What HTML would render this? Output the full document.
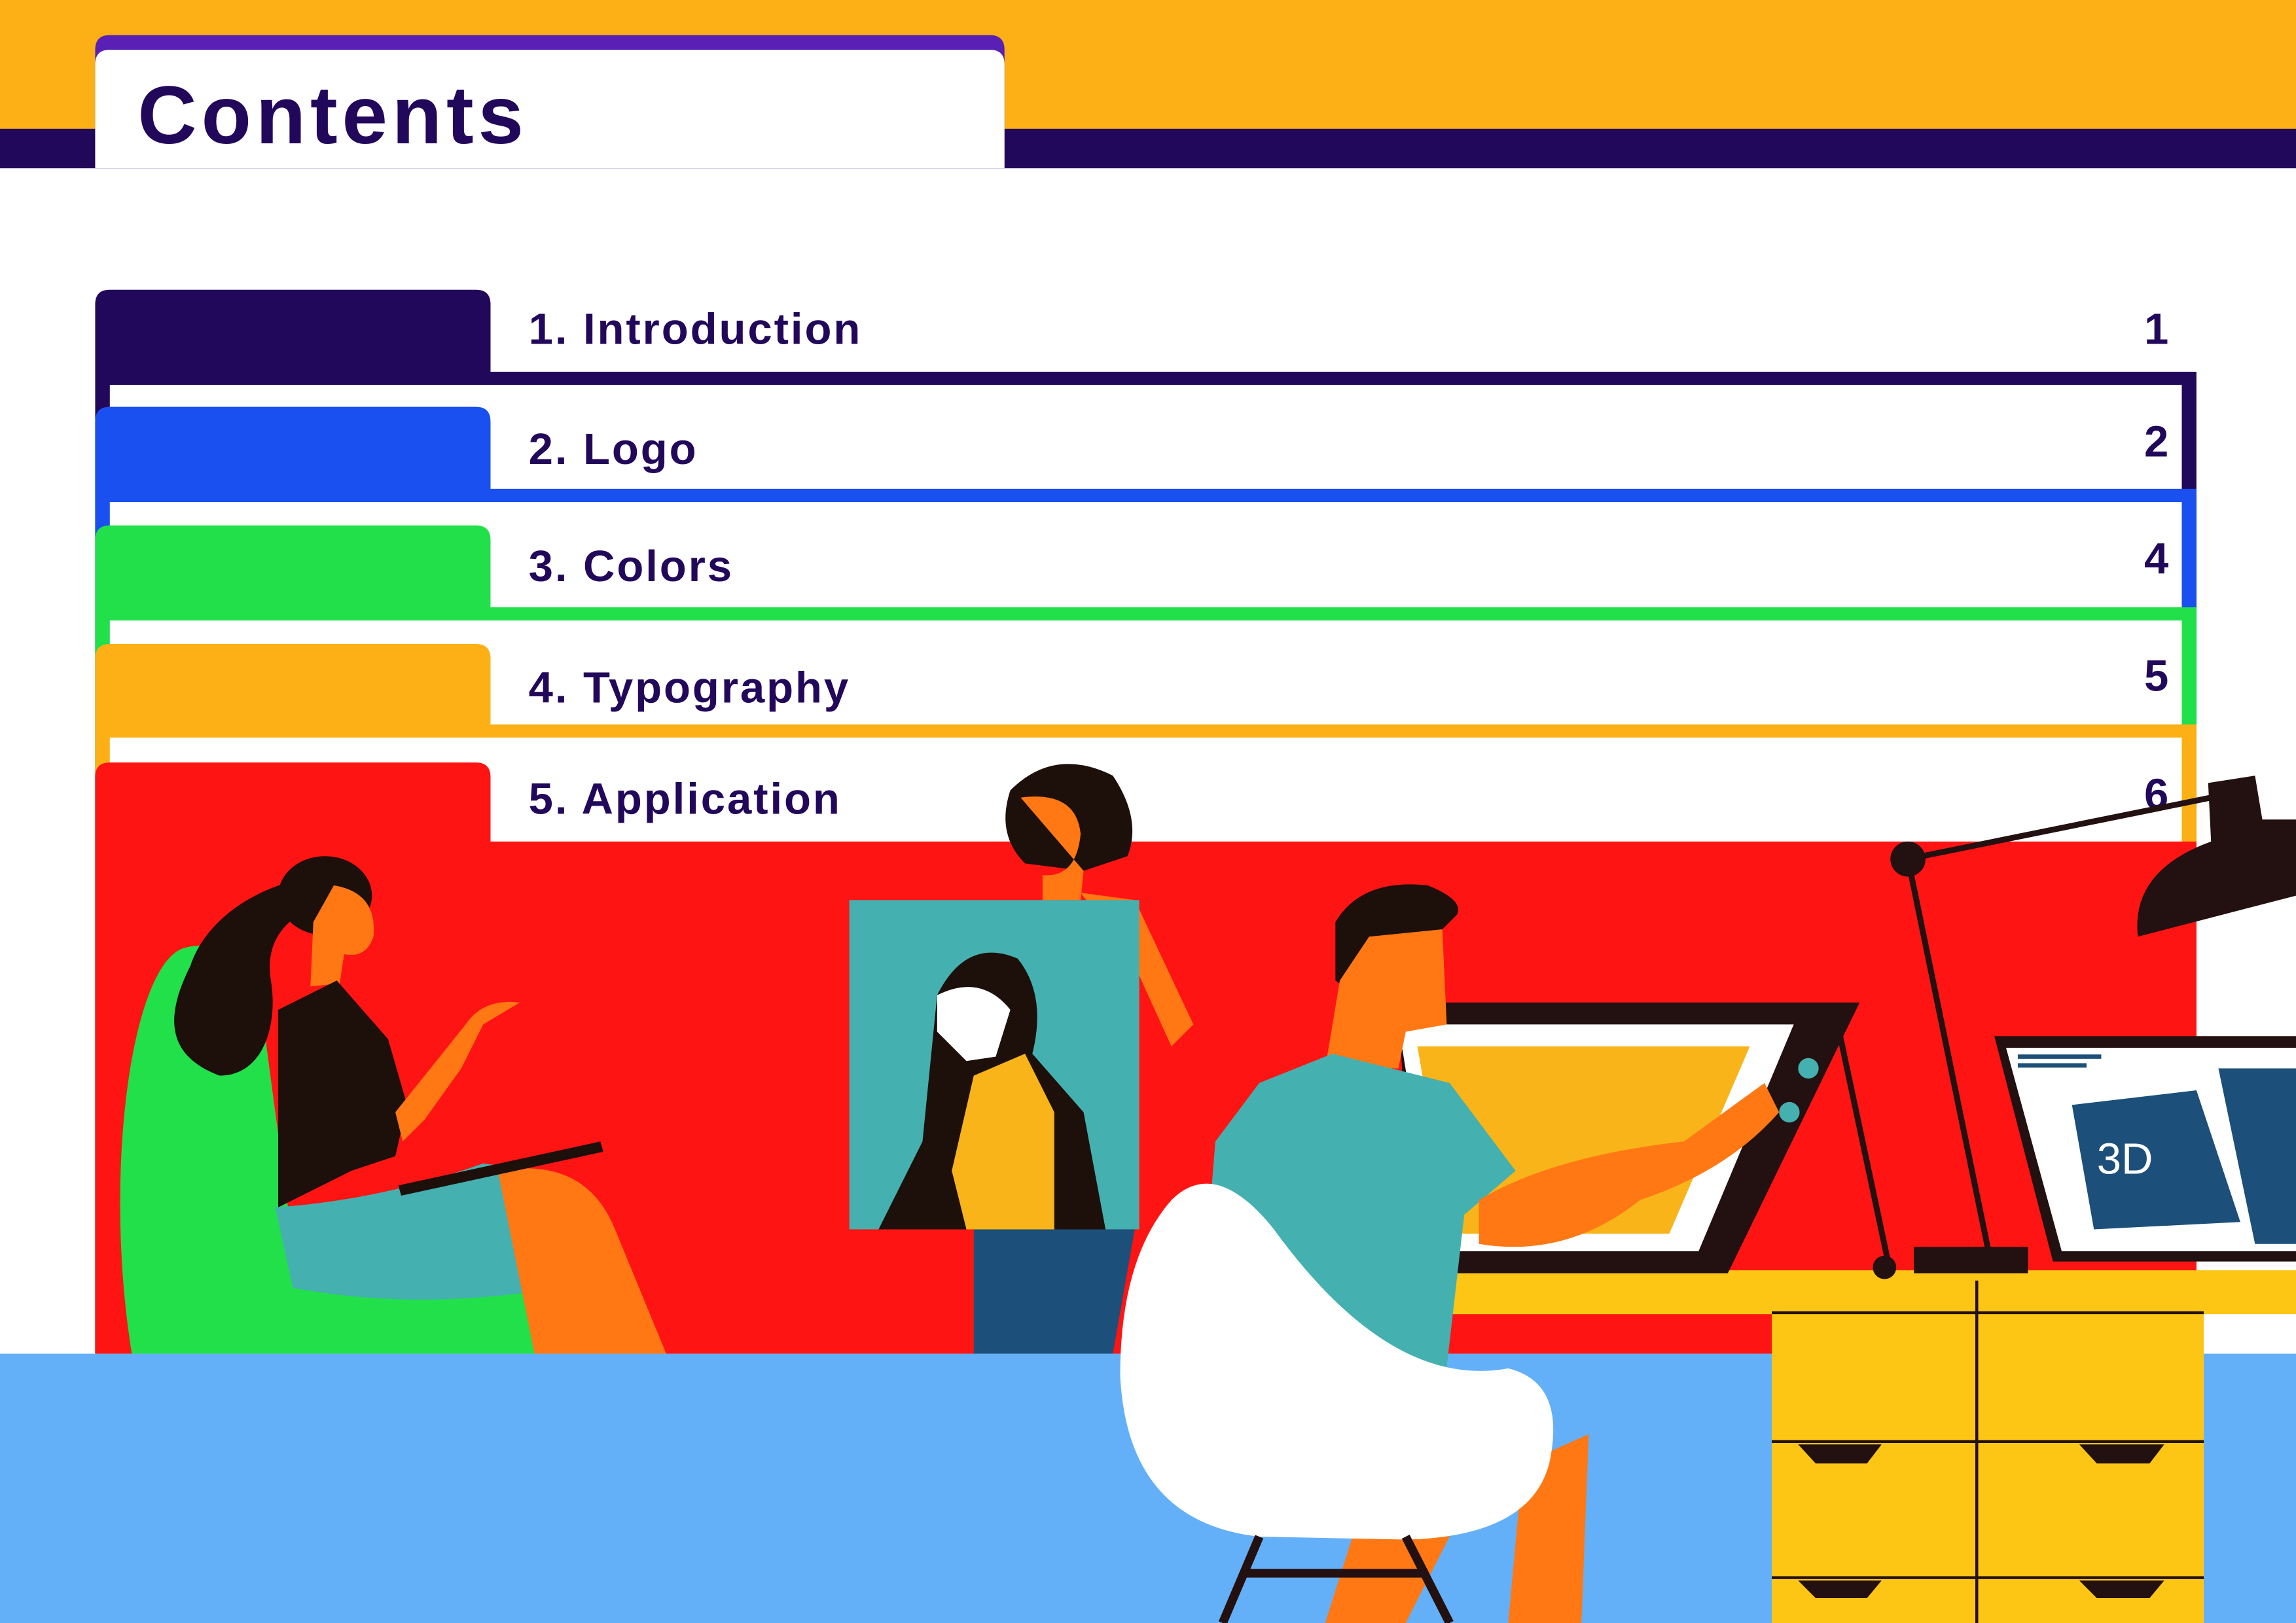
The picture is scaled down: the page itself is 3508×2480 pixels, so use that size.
<!DOCTYPE html>
<html><head><meta charset="utf-8"><style>
html,body{margin:0;padding:0;background:#fff;}
svg{display:block}
text{font-family:"Liberation Sans",sans-serif;font-weight:bold;fill:#22085a}
</style></head><body>
<svg width="3508" height="2480" viewBox="0 0 1568 1109" preserveAspectRatio="none" xmlns="http://www.w3.org/2000/svg">
<rect width="1568" height="1109" fill="#fff"/>
<rect x="0" y="0" width="1568" height="89" fill="#fdb016"/>
<rect x="0" y="88" width="1568" height="27" fill="#22085a"/>
<path d="M65 115 V34 Q65 24 75 24 H676 Q686 24 686 34 V115 Z" fill="#5a1fb5"/>
<path d="M65 115 V44 Q65 34 75 34 H676 Q686 34 686 44 V115 Z" fill="#fff"/>
<text x="94" y="98" font-size="56" letter-spacing="3">Contents</text>

<path d="M65 925 V208 Q65 198 75 198 H325 Q335 198 335 208 V254 H1500 V925 Z" fill="#22085a"/>
<rect x="75" y="263" width="1415" height="662" fill="#fff"/>
<path d="M65 925 V288 Q65 278 75 278 H325 Q335 278 335 288 V334 H1500 V925 Z" fill="#1a50f0"/>
<rect x="75" y="343" width="1415" height="582" fill="#fff"/>
<path d="M65 925 V369 Q65 359 75 359 H325 Q335 359 335 369 V415 H1500 V925 Z" fill="#22e04a"/>
<rect x="75" y="424" width="1415" height="501" fill="#fff"/>
<path d="M65 925 V450 Q65 440 75 440 H325 Q335 440 335 450 V495 H1500 V925 Z" fill="#fdb016"/>
<rect x="75" y="504" width="1415" height="421" fill="#fff"/>
<path d="M65 925 V531 Q65 521 75 521 H325 Q335 521 335 531 V575 H1500 V925 Z" fill="#ff1414"/>

<g font-size="30" letter-spacing="1.3">
<text x="361" y="235">1. Introduction</text>
<text x="361" y="317">2. Logo</text>
<text x="361" y="397">3. Colors</text>
<text x="361" y="480">4. Typography</text>
<text x="361" y="556">5. Application</text>
</g>
<g font-size="30">
<text x="1481" y="235" text-anchor="end">1</text>
<text x="1481" y="312" text-anchor="end">2</text>
<text x="1481" y="392" text-anchor="end">4</text>
<text x="1481" y="472" text-anchor="end">5</text>
<text x="1481" y="553" text-anchor="end">6</text>
</g>

<rect x="0" y="925" width="1568" height="184" fill="#64b0f8"/>

<!-- green chair -->
<path d="M90 925 C70 800 90 660 125 648 C150 640 170 660 180 700 L200 850 C300 860 400 850 445 920 L445 925 Z" fill="#22e04a"/>
<!-- left woman -->
<path d="M200 602 C170 610 140 630 130 660 C115 690 110 720 150 735 C180 735 190 700 185 670 C180 640 200 625 215 620 Z" fill="#1d0f0a"/>
<ellipse cx="222" cy="612" rx="32" ry="27" fill="#1d0f0a"/>
<path d="M228 605 Q258 610 255 640 Q250 655 235 652 L232 672 L212 674 L214 630 Z" fill="#ff7814"/>
<path d="M190 690 L230 670 L265 710 L278 755 L270 790 L240 800 L190 825 Z" fill="#1d0f0a"/>
<path d="M318 700 Q330 682 355 685 L330 700 L315 730 L290 765 L275 780 L270 760 Z" fill="#ff7814"/>
<path d="M188 825 Q260 820 330 795 L368 800 L368 882 Q280 895 200 880 Z" fill="#45b0b0"/>
<path d="M340 800 Q400 790 420 840 L455 925 L365 925 Z" fill="#ff7814"/>
<path d="M272 810 L410 780 L412 787 L274 817 Z" fill="#1d0f0a"/>
<!-- painting woman -->
<path d="M690 540 Q720 510 760 530 Q780 560 770 585 L740 595 L700 590 Q680 570 690 540Z" fill="#1d0f0a"/>
<path d="M697 545 Q735 540 738 570 Q735 600 712 598 L712 615 L738 615 L740 595 Z" fill="#ff7814"/>
<path d="M738 610 L775 615 L815 700 L800 715 L775 660 Z" fill="#ff7814"/>
<rect x="580" y="615" width="198" height="225" fill="#45b0b0"/>
<path d="M640 680 Q660 640 695 655 Q715 680 705 720 L740 760 L755 840 L600 840 L630 780 Z" fill="#1d0f0a"/>
<path d="M640 680 Q670 665 690 690 L680 722 L660 725 L640 705 Z" fill="#fff"/>
<path d="M665 735 L700 720 L720 760 L720 840 L660 840 L650 800 Z" fill="#f8b418"/>
<path d="M665 840 H775 L760 925 H665 Z" fill="#1c4f7a"/>
<!-- lamp -->
<path d="M1303 587 L1510 545 M1303 587 L1358 855" stroke="#231010" stroke-width="4" fill="none"/>
<circle cx="1303" cy="587" r="12" fill="#231010"/>
<path d="M1460 640 Q1455 595 1510 575 L1508 535 L1540 530 L1545 560 Q1565 560 1568 560 V612 Z" fill="#231010"/>
<!-- desk -->
<rect x="985" y="868" width="583" height="30" fill="#fdc614"/>
<rect x="1210" y="897" width="295" height="212" fill="#fdc614"/>
<path d="M1210 897 H1505 M1350 875 V1109 M1210 985 H1505 M1210 1078 H1505" stroke="#231010" stroke-width="2"/>
<path d="M1228 987 H1285 L1275 1000 H1240 Z M1420 987 H1478 L1468 1000 H1432 Z M1228 1080 H1285 L1275 1092 H1240 Z M1420 1080 H1478 L1468 1092 H1432 Z" fill="#231010"/>
<rect x="1307" y="852" width="78" height="18" fill="#231010"/>
<!-- monitor -->
<path d="M1362 708 H1568 V862 H1402 Z" fill="#231010"/>
<path d="M1370 716 H1568 V855 H1408 Z" fill="#fff"/>
<path d="M1415 755 L1500 745 L1530 835 L1430 840 Z" fill="#1c4f7a"/>
<path d="M1515 730 H1568 V850 H1540 Z" fill="#1c4f7a"/>
<text x="1432" y="802" font-size="30" style="fill:#fff;font-weight:normal">3D</text>
<path d="M1378 722 H1435 M1378 728 H1425" stroke="#1c4f7a" stroke-width="3"/>
<!-- tablet -->
<path d="M955 685 H1270 L1180 870 H965 Z" fill="#231010"/>
<path d="M955 700 H1225 L1160 855 H980 Z" fill="#fff"/>
<path d="M968 715 H1195 L1140 843 H990 Z" fill="#f8b418"/>
<path d="M1255 700 L1290 865" stroke="#231010" stroke-width="4"/>
<circle cx="1287" cy="866" r="8" fill="#231010"/>
<circle cx="1235" cy="730" r="7" fill="#45b0b0"/><circle cx="1222" cy="760" r="7" fill="#45b0b0"/>
<!-- man -->
<path d="M912 630 Q930 600 975 605 Q1000 615 995 625 L980 640 L955 640 Q930 660 925 680 L912 670 Z" fill="#1d0f0a"/>
<path d="M935 640 L985 635 L988 700 L960 705 L955 730 L905 730 L915 670 Z" fill="#ff7814"/>
<path d="M860 740 L910 720 L990 740 L1035 800 L1000 830 L985 960 L815 965 L830 780 Z" fill="#45b0b0"/>
<path d="M1010 820 Q1060 790 1150 780 L1205 740 L1215 760 Q1180 800 1120 820 Q1070 860 1010 850 Z" fill="#ff7814"/>
<path d="M1040 1000 L1085 980 L1080 1109 L1030 1109 Z M930 1030 L1000 1030 L960 1109 L905 1109 Z" fill="#ff7814"/>
<!-- white chair -->
<path d="M800 820 Q830 790 870 840 Q950 950 1030 935 Q1070 945 1058 1000 Q1045 1050 960 1052 L860 1050 Q770 1040 765 940 Q765 860 800 820 Z" fill="#fff"/>
<path d="M860 1050 L835 1109 M960 1050 L990 1109 M850 1075 H975" stroke="#231010" stroke-width="6"/>
</svg>
</body></html>
